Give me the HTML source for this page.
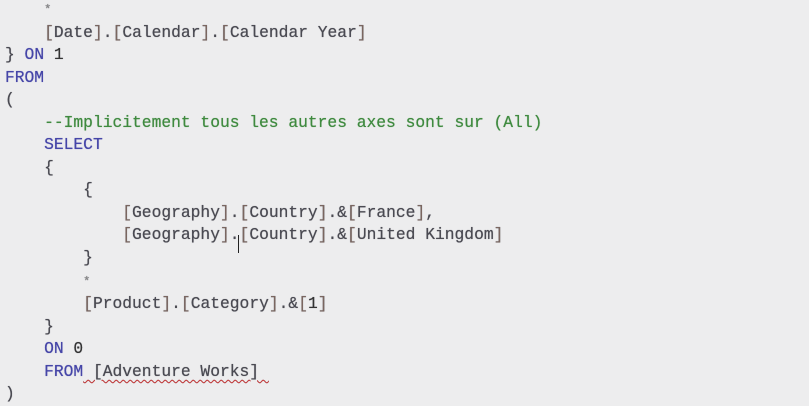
<!DOCTYPE html>
<html><head><meta charset="utf-8"><style>
html,body{margin:0;padding:0;}
body{width:809px;height:401px;background:#ededee;overflow:hidden;position:relative;}
pre{position:absolute;left:5px;top:-2px;margin:0;font-family:"Liberation Mono",monospace;font-size:16.3px;line-height:22.55px;color:#4a4a52;white-space:pre;text-shadow:0 0 0.6px #4a4a52;}
.k{color:#4646a8;text-shadow:0 0 0.6px #4646a8;}.c{color:#3f8a3f;text-shadow:0 0 0.6px #3f8a3f;}.b{color:#7a6660;}.n{color:#333;}
.a{color:#888;font-size:12px;}
.sq{text-decoration:underline wavy #d04040;text-decoration-thickness:1px;text-underline-offset:3px;}
.cur{position:absolute;left:238px;top:235px;width:1px;height:18px;background:#222;}
</style></head><body>
<pre>    <span class="a">*</span>
    <span class="b">[</span>Date<span class="b">]</span>.<span class="b">[</span>Calendar<span class="b">]</span>.<span class="b">[</span>Calendar Year<span class="b">]</span>
} <span class="k">ON</span> <span class="n">1</span>
<span class="k">FROM</span>
(
    <span class="c">--Implicitement tous les autres axes sont sur (All)</span>
    <span class="k">SELECT</span>
    {
        {
            <span class="b">[</span>Geography<span class="b">]</span>.<span class="b">[</span>Country<span class="b">]</span>.&amp;<span class="b">[</span>France<span class="b">]</span>,
            <span class="b">[</span>Geography<span class="b">]</span>.<span class="b">[</span>Country<span class="b">]</span>.&amp;<span class="b">[</span>United Kingdom<span class="b">]</span>
        }
        <span class="a">*</span>
        <span class="b">[</span>Product<span class="b">]</span>.<span class="b">[</span>Category<span class="b">]</span>.&amp;<span class="b">[</span><span class="n">1</span><span class="b">]</span>
    }
    <span class="k">ON</span> <span class="n">0</span>
    <span class="k">FROM</span><span class="sq"> [Adventure Works] </span>
)</pre>
<div class="cur"></div>
</body></html>
